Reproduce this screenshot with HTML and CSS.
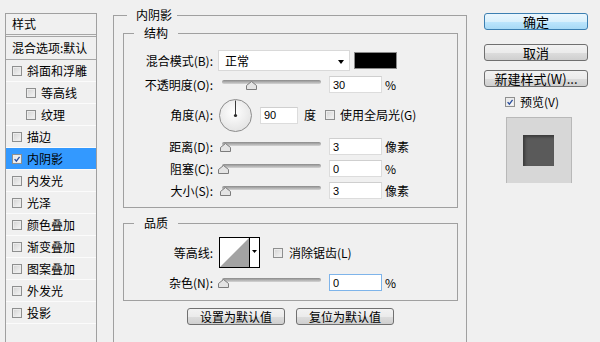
FILE: index.html
```html
<!DOCTYPE html>
<html lang="zh-CN">
  <head>
    <meta charset="UTF-8" />
    <title>图层样式</title>
    <link rel="stylesheet" href="styles.css">
  </head>
  <body>
    <div class="dialog">
      <!-- Style list -->
      <div class="style-list">
        <div class="list-head">样式</div>
        <div class="list-blend">混合选项:默认</div>
        <ul class="list-items">
          <li><span class="cb"></span>斜面和浮雕</li>
          <li class="sub"><span class="cb"></span>等高线</li>
          <li class="sub"><span class="cb"></span>纹理</li>
          <li><span class="cb"></span>描边</li>
          <li class="selected"><span class="cb checked"><svg viewBox="0 0 10 10"><path d="M2 5.2 L4.2 7.6 L8.2 2.4" /></svg></span>内阴影</li>
          <li><span class="cb"></span>内发光</li>
          <li><span class="cb"></span>光泽</li>
          <li><span class="cb"></span>颜色叠加</li>
          <li><span class="cb"></span>渐变叠加</li>
          <li><span class="cb"></span>图案叠加</li>
          <li><span class="cb"></span>外发光</li>
          <li><span class="cb"></span>投影</li>
        </ul>
      </div>

      <!-- Settings -->
      <div class="settings">
        <fieldset class="group outer">
          <legend>内阴影</legend>

          <fieldset class="group inner">
            <legend>结构</legend>
            <div class="fields structure">
              <div class="row blend">
                <label>混合模式(B):</label>
                <div class="select">正常<span class="arrow"></span></div>
                <span class="swatch"></span>
              </div>
              <div class="row">
                <label>不透明度(O):</label>
                <div class="slider"><span class="track"></span><svg class="thumb" style="left: 28px" viewBox="0 0 11 9"><path d="M0.5 8.5 V4.5 L5.5 0.5 L10.5 4.5 V8.5 Z" /></svg></div>
                <input class="num" type="text" value="30">
                <span class="unit">%</span>
              </div>
              <div class="row angle">
                <label>角度(A):</label>
                <svg class="dial" viewBox="0 0 33 33">
                  <defs>
                    <radialGradient id="dialfill" cx="45%" cy="40%" r="65%">
                      <stop offset="0" stop-color="#ffffff" />
                      <stop offset="1" stop-color="#e2e2e2" />
                    </radialGradient>
                  </defs>
                  <circle cx="16.5" cy="16.5" r="16" fill="url(#dialfill)" stroke="#8c8c8c" />
                  <line x1="16.5" y1="16.5" x2="16.5" y2="1.5" stroke="#3a3a3a" />
                  <circle cx="16.5" cy="16.5" r="1.6" fill="#2a2a2a" />
                </svg>
                <input class="num short" type="text" value="90">
                <span class="unit deg">度</span>
                <span class="cb"></span>
                <span class="cb-label">使用全局光(G)</span>
              </div>
              <div class="row">
                <label>距离(D):</label>
                <div class="slider"><span class="track"></span><svg class="thumb" style="left: 2px" viewBox="0 0 11 9"><path d="M0.5 8.5 V4.5 L5.5 0.5 L10.5 4.5 V8.5 Z" /></svg></div>
                <input class="num" type="text" value="3">
                <span class="unit">像素</span>
              </div>
              <div class="row">
                <label>阻塞(C):</label>
                <div class="slider"><span class="track"></span><svg class="thumb" style="left: 0px" viewBox="0 0 11 9"><path d="M0.5 8.5 V4.5 L5.5 0.5 L10.5 4.5 V8.5 Z" /></svg></div>
                <input class="num" type="text" value="0">
                <span class="unit">%</span>
              </div>
              <div class="row">
                <label>大小(S):</label>
                <div class="slider"><span class="track"></span><svg class="thumb" style="left: 2px" viewBox="0 0 11 9"><path d="M0.5 8.5 V4.5 L5.5 0.5 L10.5 4.5 V8.5 Z" /></svg></div>
                <input class="num" type="text" value="3">
                <span class="unit">像素</span>
              </div>
            </div>
          </fieldset>

          <fieldset class="group inner quality">
            <legend>品质</legend>
            <div class="fields">
              <div class="row contour-row">
                <label>等高线:</label>
                <svg class="contour" viewBox="0 0 41 31">
                  <rect x="0.5" y="0.5" width="40" height="30" fill="#fff" stroke="#000" />
                  <polygon points="1,30 30,1 30,30" fill="#a3a3a3" />
                  <line x1="30.5" y1="0" x2="30.5" y2="31" stroke="#000" />
                  <polygon points="33,13 38,13 35.5,16" fill="#000" />
                </svg>
                <span class="cb"></span>
                <span class="cb-label">消除锯齿(L)</span>
              </div>
              <div class="row">
                <label>杂色(N):</label>
                <div class="slider"><span class="track"></span><svg class="thumb" style="left: 0px" viewBox="0 0 11 9"><path d="M0.5 8.5 V4.5 L5.5 0.5 L10.5 4.5 V8.5 Z" /></svg></div>
                <input class="num focus" type="text" value="0">
                <span class="unit">%</span>
              </div>
            </div>
          </fieldset>

          <div class="defaults">
            <button class="btn">设置为默认值</button>
            <button class="btn">复位为默认值</button>
          </div>
        </fieldset>
      </div>

      <!-- Actions -->
      <div class="actions">
        <button class="btn primary">确定</button>
        <button class="btn cancel">取消</button>
        <button class="btn new-style">新建样式(W)...</button>
        <div class="preview-toggle">
          <span class="cb checked"><svg viewBox="0 0 10 10"><path d="M2 5.2 L4.2 7.6 L8.2 2.4" /></svg></span>
          <span class="cb-label">预览(V)</span>
        </div>
        <div class="preview">
          <div class="preview-square"></div>
        </div>
      </div>
    </div>
  </body>
</html>
```

FILE: styles.css
```css
/* Global */
* {
  box-sizing: border-box;
}

body {
  margin: 0;
  height: 342px;
  overflow: hidden;
  background-color: #f0f0f0;
  font-family: "Noto Sans CJK SC", sans-serif;
  font-size: 12px;
  line-height: 16px;
  color: #000;
}

.dialog {
  display: flex;
  align-items: flex-start;
}

/* Checkboxes */
.cb {
  display: inline-block;
  flex: none;
  width: 10px;
  height: 10px;
  border: 1px solid #8e8f8f;
  background: linear-gradient(135deg, #d2d2d2, #f6f6f6);
  box-shadow: inset 0 0 0 1px #ececec;
}

.cb.checked {
  background: linear-gradient(135deg, #e4e4e4, #fbfbfb);
}

.cb svg {
  display: block;
  width: 8px;
  height: 8px;
}

.cb svg path {
  fill: none;
  stroke: #2b4f9e;
  stroke-width: 1.7;
}

.cb-label {
  white-space: nowrap;
}

/* Style list */
.style-list {
  margin: 13px 0 0 5px;
  width: 92px;
  height: 340px;
  border: 1px solid #a0a0a0;
  border-bottom: none;
}

.list-head {
  height: 23px;
  padding: 1px 0 0 6px;
  line-height: 18px;
  border-bottom: 3px double #a6a6a6;
}

.list-blend {
  height: 23px;
  padding-left: 6px;
  line-height: 21px;
  white-space: nowrap;
  overflow: hidden;
  border-bottom: 1px solid #a6a6a6;
}

.list-items {
  list-style: none;
  margin: 0;
  padding: 0;
}

.list-items li {
  display: flex;
  align-items: center;
  gap: 5px;
  height: 22px;
  padding-left: 6px;
  border-bottom: 1px solid #fbfbfb;
}

.list-items li.sub {
  padding-left: 20px;
}

.list-items li.selected {
  background-color: #3399ff;
}

/* Settings groups */
.settings {
  margin: 7px 0 0 16px;
  width: 354px;
}

.group {
  margin: 0;
  padding: 0;
  min-width: 0;
  border: 1px solid #a0a0a0;
}

.group legend {
  line-height: 16px;
}

.outer {
  height: 345px;
  padding: 2px 8px 0 9px;
}

.outer > legend {
  margin-left: 4px;
  padding: 0 5px 0 9px;
}

.inner > legend {
  margin-left: 10px;
  padding: 0 10px;
}

.quality {
  margin-top: 7px;
}

.fields {
  display: flex;
  flex-direction: column;
  gap: 5px;
  padding: 9px 0 8px;
}

.quality .fields {
  gap: 6px;
  padding: 6px 0 9px;
}

.row {
  display: flex;
  align-items: center;
  height: 17px;
}

.row > label {
  width: 89px;
  margin-right: 5px;
  text-align: right;
  white-space: nowrap;
  flex: none;
}

/* Blend mode */
.row.blend {
  height: 21px;
}

.select {
  position: relative;
  width: 132px;
  height: 21px;
  padding-left: 6px;
  line-height: 20px;
  background-color: #fff;
  border: 1px solid #d9d9d9;
}

.select .arrow {
  position: absolute;
  right: 5px;
  top: 9px;
  border-left: 3.5px solid transparent;
  border-right: 3.5px solid transparent;
  border-top: 4px solid #000;
}

.swatch {
  width: 43px;
  height: 17px;
  margin-left: 4px;
  background-color: #000;
  border: 1px solid #8a8a8a;
}

/* Sliders */
.slider {
  position: relative;
  width: 104px;
  height: 17px;
  flex: none;
}

.track {
  position: absolute;
  left: 4px;
  top: 4px;
  width: 99px;
  height: 4px;
  border-radius: 2px;
  background: linear-gradient(#8a8a8a, #d4d4d4);
}

.thumb {
  position: absolute;
  top: 5px;
  width: 11px;
  height: 9px;
}

.thumb path {
  fill: #e4e4e4;
  stroke: #7c7c7c;
}

/* Number inputs */
.num {
  width: 53px;
  height: 17px;
  margin: 0 0 0 7px;
  padding: 0 0 0 3px;
  font-family: "Liberation Sans", sans-serif;
  font-size: 11px;
  color: #000;
  background-color: #fff;
  border: 1px solid #dcdcdc;
  border-top-color: #cfcfcf;
  outline: none;
}

.num.short {
  width: 38px;
  margin-left: 8px;
}

.num.focus {
  border-color: #7eb4ea;
}

.unit {
  margin-left: 3px;
  white-space: nowrap;
}

/* Angle */
.row.angle {
  height: 32px;
  margin-top: 1px;
}

.row.angle + .row {
  margin-top: 2px;
}

.dial {
  width: 33px;
  height: 33px;
  margin-left: 1px;
  flex: none;
}

.unit.deg {
  margin-left: 6px;
}

.row.angle .cb {
  margin: 0 5px 0 9px;
}

/* Contour */
.row.contour-row {
  height: 31px;
}

.contour {
  width: 41px;
  height: 31px;
  margin-left: 1px;
  flex: none;
}

.contour-row .cb {
  margin: 0 6px 0 13px;
}

/* Buttons */
.btn {
  height: 17px;
  padding: 0;
  font-family: "Noto Sans CJK SC", sans-serif;
  font-size: 12px;
  line-height: 14px;
  color: #000;
  border: 1px solid #707070;
  border-radius: 3px;
  background: linear-gradient(#f2f2f2 0%, #ebebeb 50%, #dddddd 51%, #cfcfcf 100%);
}

.defaults {
  display: flex;
  justify-content: center;
  gap: 11px;
  margin-top: 7px;
}

.defaults .btn {
  width: 98px;
}

/* Right column */
.actions {
  display: flex;
  flex-direction: column;
  margin: 13px 0 0 17px;
  width: 104px;
}

.actions .btn {
  width: 104px;
  font-size: 13px;
}

.btn.primary {
  border-color: #3c7fb1;
  background: linear-gradient(#eaf6fd 0%, #d9f0fc 50%, #bee6fd 51%, #a7d9f5 100%);
}

.btn.cancel {
  margin-top: 14px;
}

.btn.new-style {
  margin-top: 9px;
}

.preview-toggle {
  display: flex;
  align-items: center;
  gap: 5px;
  height: 16px;
  margin: 7px 0 0 21px;
}

.preview {
  width: 66px;
  height: 66px;
  margin: 7px 0 0 22px;
  padding: 17px 0 0 16px;
  background-color: #d7d7d7;
  border: 1px solid #b8b8b8;
  border-bottom: none;
}

.preview-square {
  width: 31px;
  height: 31px;
  background-color: #5a5a5a;
  box-shadow: inset 2px 2px 3px #3a3a3a;
}
```
